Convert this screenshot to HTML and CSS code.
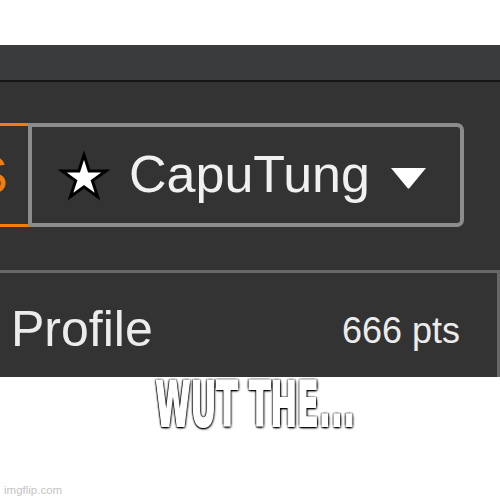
FILE: index.html
```html
<!DOCTYPE html>
<html lang="en">
<head>
  <meta charset="UTF-8" />
  <meta name="viewport" content="width=device-width, initial-scale=1.0"/>
  <title>WUT THE...</title>
  <link rel="stylesheet" href="styles.css">
</head>
<body>

<div class="meme">
  <div class="shot">
    <div class="topbar"></div>

    <div class="nav">
      <div class="tab"><span>S</span></div>
      <div class="user">
        <svg class="star" viewBox="0 0 56 52" width="56" height="52">
          <path d="M28 5 L33.17 20.89 L49.87 20.89 L36.36 30.72 L41.52 46.61 L28 36.79 L14.48 46.61 L19.64 30.72 L6.13 20.89 L22.83 20.89 Z"
                fill="#fff" stroke="#000" stroke-width="3" stroke-linejoin="miter" stroke-miterlimit="10"/>
        </svg>
        <span class="name">CapuTung</span>
        <svg class="caret" viewBox="0 0 35 21" width="35" height="21">
          <path d="M0 0 H35 L18.5 20 Q17.5 21 16.5 20 Z" fill="#fff"/>
        </svg>
      </div>
    </div>

    <div class="profile">
      <span class="label">Profile</span>
      <span class="pts">666 pts</span>
    </div>
  </div>

  <div class="caption"><span>WUT THE...</span></div>

  <div class="watermark">imgflip.com</div>
</div>

</body>
</html>
```

FILE: styles.css
```css
* {
  margin: 0;
  padding: 0;
  box-sizing: border-box;
}

body {
  width: 500px;
  height: 500px;
  background: #fff;
  font-family: "Liberation Sans", Arial, sans-serif;
  overflow: hidden;
}

.meme {
  height: 500px;
  display: flex;
  flex-direction: column;
  padding-top: 45px;
}

.shot {
  height: 332px;
  background: #333333;
  overflow: hidden;
}

.topbar {
  height: 37px;
  background: #3a3b3d;
  border-bottom: 2px solid #141414;
}

.nav {
  display: flex;
  height: 104px;
  margin-top: 41px;
}

.tab {
  width: 28px;
  display: flex;
  align-items: center;
  justify-content: flex-end;
  padding-right: 20px;
  overflow: hidden;
  border-top: 3px solid #f07c14;
  border-bottom: 3px solid #f07c14;
  color: #f07c14;
  font-size: 52px;
  line-height: 1;
}

.user {
  width: 436px;
  display: flex;
  align-items: center;
  padding: 0 34px 0 24px;
  border: 4px solid #8c8c8c;
  border-radius: 0 7px 7px 0;
}

.star {
  display: block;
  margin-top: 2px;
  filter: blur(0.4px);
}

.name {
  margin-left: 17px;
  font-size: 52px;
  line-height: 1;
  color: #f0f0f0;
  padding-bottom: 2px;
}

.caret {
  display: block;
  margin-left: auto;
  margin-top: 6px;
}

.profile {
  height: 107px;
  margin-top: 43px;
  display: flex;
  align-items: center;
  justify-content: space-between;
  padding: 7px 37px 0 11px;
  border-top: 3px solid #676767;
  border-right: 3px solid #676767;
  color: #ececec;
}

.label {
  font-size: 50px;
  line-height: 1;
}

.pts {
  font-size: 36px;
  line-height: 1;
  margin-top: 4px;
}

.caption {
  margin-top: 3px;
  text-align: center;
  padding-left: 10px;
  font-family: "Liberation Sans Narrow", "DejaVu Sans Condensed", sans-serif;
  font-weight: 700;
  font-size: 63px;
  line-height: 50px;
  color: #fff;
}

.caption span {
  display: inline-block;
  transform: scaleX(0.56);
  -webkit-text-stroke: 2px #fff;
  text-shadow: 2px 2px 3px #000, -2px -1px 2px #000, 2px -1px 2px #000, -1px 2px 2px #000;
}

.watermark {
  margin-top: auto;
  padding: 0 0 4px 4px;
  font-size: 11.5px;
  color: #c4c4c4;
}
```
